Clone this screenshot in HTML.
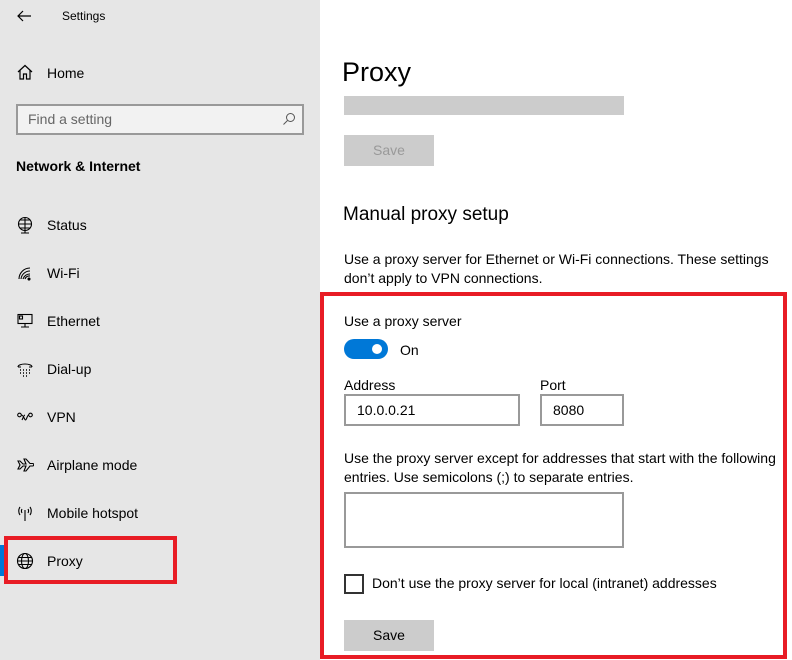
<!DOCTYPE html>
<html><head><style>
*{margin:0;padding:0;box-sizing:border-box}
body{width:792px;height:660px;position:relative;overflow:hidden;background:#fff;font-family:"Liberation Sans",sans-serif;color:#000;font-size:14px}
.a{position:absolute;white-space:nowrap}
#side{position:absolute;left:0;top:0;width:320px;height:660px;background:#e6e6e6}
.ic{position:absolute;left:16px;width:18px;height:18px}
.nav{position:absolute;left:47px;font-size:14px}
</style></head><body>
<div id="side">
<svg class="a" style="left:16px;top:9px" width="16" height="14" viewBox="0 0 16 14"><path d="M15 7H2M7 2L2 7l5 5" fill="none" stroke="#000" stroke-width="1.2"/></svg>
<div class="a" style="left:62px;top:9px;font-size:12px">Settings</div>
<svg class="a" style="left:17px;top:64px" width="16" height="16" viewBox="0 0 16 16"><path d="M1 8L8 1.5 15 8M3 6.5V15h3.5v-5h3v5H13V6.5" fill="none" stroke="#000" stroke-width="1.2"/></svg>
<div class="nav" style="top:65px">Home</div>
<div class="a" style="left:16px;top:104px;width:288px;height:31px;border:2px solid #999;background:#f2f2f2"></div>
<div class="a" style="left:28px;top:111px;color:#666">Find a setting</div>
<svg class="a" style="left:282px;top:112px" width="14" height="14" viewBox="0 0 14 14"><circle cx="8.5" cy="5.5" r="4" fill="none" stroke="#555" stroke-width="1"/><path d="M5.5 8.5L1.5 12.5" stroke="#555"/></svg>
<div class="a" style="left:16px;top:158px;font-weight:bold">Network &amp; Internet</div>
<svg class="ic" style="top:216px" viewBox="0 0 18 18" fill="none" stroke="#000" stroke-width="1.1"><circle cx="9" cy="8" r="6.5"/><path d="M2.5 8h13M9 1.5v13M4 4h10M4 12h10M5 17h8M9 14.5v2.5"/></svg>
<div class="nav" style="top:217px">Status</div>
<svg class="ic" style="top:264px" viewBox="0 0 18 18" fill="none" stroke="#000" stroke-width="1.1"><path d="M3 15A11 11 0 0 1 14 4M5 15A9 9 0 0 1 14 7M7 15A7 7 0 0 1 14 10M9 15a5 5 0 0 1 5-3"/><circle cx="13" cy="15" r="1" fill="#000"/></svg>
<div class="nav" style="top:265px">Wi-Fi</div>
<svg class="ic" style="top:312px" viewBox="0 0 18 18" fill="none" stroke="#000" stroke-width="1.1"><rect x="2" y="2.5" width="14" height="9"/><rect x="3.5" y="4" width="3" height="3"/><path d="M9 11.5v3M5 15h8"/></svg>
<div class="nav" style="top:313px">Ethernet</div>
<svg class="ic" style="top:360px" viewBox="0 0 18 18" fill="none" stroke="#000" stroke-width="1.1"><path d="M2 7c0-4 14-4 14 0M2 7h3M13 7h3"/><path d="M4 10h1M7 10h1M10 10h1M13 10h1M4 13h1M7 13h1M10 13h1M13 13h1M7 16h1M10 16h1" stroke-width="1.5"/></svg>
<div class="nav" style="top:361px">Dial-up</div>
<svg class="ic" style="top:408px" viewBox="0 0 18 18" fill="none" stroke="#000" stroke-width="1.1"><circle cx="3.5" cy="7" r="1.8"/><circle cx="14.5" cy="7" r="1.8"/><path d="M5.5 7c2 0 3 5 4 5s2-5 3-5M6 12c1-2 2-5 3-5"/></svg>
<div class="nav" style="top:409px">VPN</div>
<svg class="ic" style="top:456px" viewBox="0 0 18 18" fill="none" stroke="#000" stroke-width="1.1"><path d="M2 5l2 4-2 4h2l3-3h3l-2 5h2l4-5h2.5a1.2 1.2 0 0 0 0-2.5H14L10 3H8l2 5H7L4 5z"/></svg>
<div class="nav" style="top:457px">Airplane mode</div>
<svg class="ic" style="top:504px" viewBox="0 0 18 18" fill="none" stroke="#000" stroke-width="1.1"><path d="M9 6v11M4 3a7 7 0 0 0 0 8M14 3a7 7 0 0 1 0 8M6 5a4 4 0 0 0 0 4M12 5a4 4 0 0 1 0 4"/></svg>
<div class="nav" style="top:505px">Mobile hotspot</div>
<div class="a" style="left:0;top:545px;width:4px;height:31px;background:#0078d7"></div>
<svg class="ic" style="top:552px" viewBox="0 0 18 18" fill="none" stroke="#000" stroke-width="1.1"><circle cx="9" cy="9" r="7.5"/><ellipse cx="9" cy="9" rx="3.5" ry="7.5"/><path d="M1.5 9h15M2.5 5.5h13M2.5 12.5h13"/></svg>
<div class="nav" style="top:553px">Proxy</div>
<div class="a" style="left:4px;top:536px;width:173px;height:48px;border:4px solid #e81c25"></div>
</div>
<div class="a" style="left:342px;top:57px;font-size:27px">Proxy</div>
<div class="a" style="left:344px;top:96px;width:280px;height:19px;background:#ccc"></div>
<div class="a" style="left:344px;top:135px;width:90px;height:31px;background:#ccc;color:#999;text-align:center;line-height:31px">Save</div>
<div class="a" style="left:343px;top:204px;font-size:19px">Manual proxy setup</div>
<div class="a" style="left:344px;top:250px;line-height:19px">Use a proxy server for Ethernet or Wi-Fi connections. These settings<br>don’t apply to VPN connections.</div>
<div class="a" style="left:320px;top:292px;width:467px;height:367px;border:4px solid #e81c25"></div>
<div class="a" style="left:344px;top:313px">Use a proxy server</div>
<div class="a" style="left:344px;top:339px;width:44px;height:20px;border-radius:10px;background:#0078d7"></div>
<div class="a" style="left:372px;top:344px;width:10px;height:10px;border-radius:5px;background:#fff"></div>
<div class="a" style="left:400px;top:342px">On</div>
<div class="a" style="left:344px;top:377px">Address</div>
<div class="a" style="left:540px;top:377px">Port</div>
<div class="a" style="left:344px;top:394px;width:176px;height:32px;border:2px solid #999;padding:6px 0 0 11px">10.0.0.21</div>
<div class="a" style="left:540px;top:394px;width:84px;height:32px;border:2px solid #999;padding:6px 0 0 11px">8080</div>
<div class="a" style="left:344px;top:449px;line-height:19px">Use the proxy server except for addresses that start with the following<br>entries. Use semicolons (;) to separate entries.</div>
<div class="a" style="left:344px;top:492px;width:280px;height:56px;border:2px solid #999"></div>
<div class="a" style="left:344px;top:574px;width:20px;height:20px;border:2px solid #333"></div>
<div class="a" style="left:372px;top:575px">Don’t use the proxy server for local (intranet) addresses</div>
<div class="a" style="left:344px;top:620px;width:90px;height:31px;background:#ccc;text-align:center;line-height:31px">Save</div>
</body></html>
